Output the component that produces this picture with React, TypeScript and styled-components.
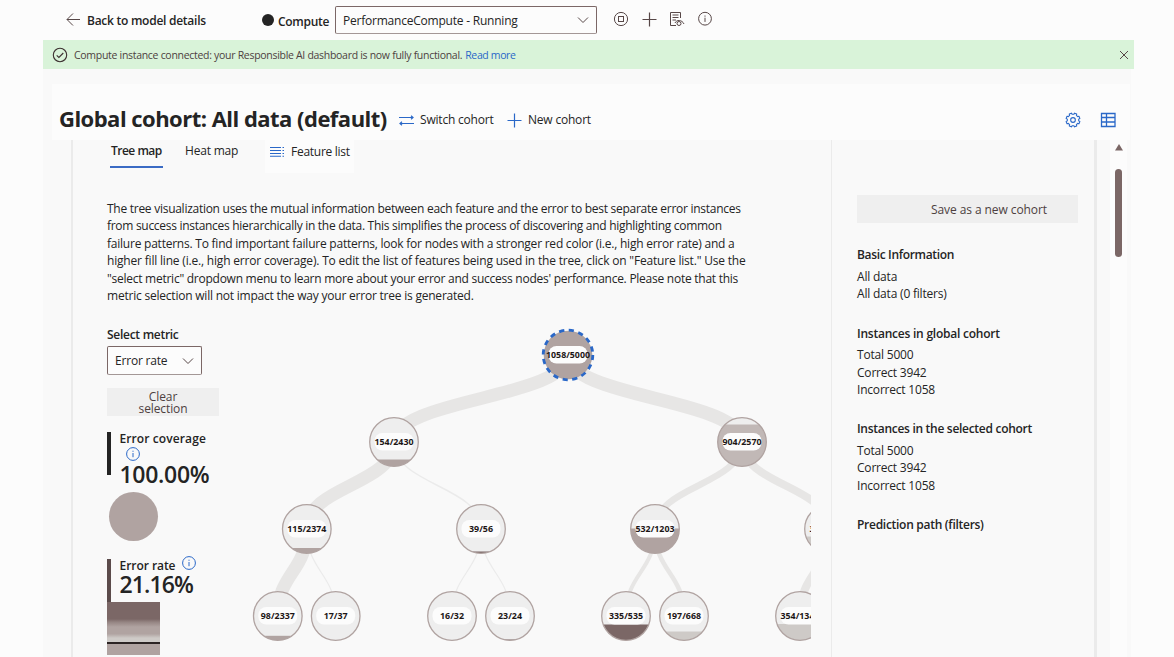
import React from "react";
import styled, { createGlobalStyle } from "styled-components";

const GlobalStyle = createGlobalStyle`
  * { box-sizing: border-box; }
  body {
    margin: 0;
    background: #fcfcfc;
    color: #242424;
    font-family: "Open Sans", "Noto Sans", sans-serif;
    font-size: 12px;
    overflow: hidden;
  }
`;

const Page = styled.div`
  width: 1174px;
  height: 657px;
  overflow: hidden;
  display: flex;
  flex-direction: column;
`;

const Label = styled.span<{ $size?: number; $weight?: number; $track?: number; $color?: string }>`
  font-size: ${(p) => p.$size ?? 12}px;
  font-weight: ${(p) => p.$weight ?? 400};
  letter-spacing: ${(p) => p.$track ?? -0.2}px;
  color: ${(p) => p.$color ?? "#242424"};
  line-height: 18px;
  white-space: nowrap;
`;

const TopBar = styled.header`
  height: 40px;
  flex: none;
  display: flex;
  padding-left: 66px;
`;

const BackLink = styled.div`
  display: flex;
  align-items: center;
  gap: 7px;
  height: 41px;
  width: 196px;
  & > svg { margin-bottom: 1px; }
`;

const ComputeLabel = styled.div`
  display: flex;
  align-items: center;
  gap: 4px;
  height: 43px;
  width: 73px;
`;

const StatusDot = styled.span`
  width: 12px;
  height: 12px;
  border-radius: 50%;
  background: #242424;
  margin-bottom: 3px;
`;

const Select = styled.div<{ $width: number; $height: number }>`
  width: ${(p) => p.$width}px;
  height: ${(p) => p.$height}px;
  flex: none;
  border: 1px solid #7b6766;
  border-bottom-color: #a39796;
  border-radius: 2px;
  background: #fcfcfc;
  display: flex;
  align-items: center;
  justify-content: space-between;
  padding: 0 7px;
`;

const ComputeSelect = styled(Select)`
  margin-top: 6px;
  & > span { margin-top: 2px; }
`;

const TopIcons = styled.div`
  display: flex;
  gap: 12px;
  margin: 11px 0 0 16px;
`;

const Banner = styled.div`
  flex: none;
  height: 29px;
  margin: 0 40px 0 43px;
  background: #d9f3d9;
  display: flex;
  align-items: center;
  padding: 0 5px 0 9px;
`;

const BannerText = styled.div`
  flex: 1;
  display: flex;
  gap: 3px;
  margin-left: 6px;
`;

const Workspace = styled.main`
  flex: 1;
  margin: 0 43px;
  background: #f9f9f9;
  padding: 15px 0 0 9px;
  display: flex;
  flex-direction: column;
`;

const CohortHeader = styled.div`
  flex: none;
  height: 56px;
  width: 1078px;
  background: #fcfcfc;
  display: flex;
  align-items: center;
  padding: 15px 14px 0 7px;
`;

const CohortTitle = styled.h1`
  margin: 0 0 3px;
  width: 340px;
  font-size: 22px;
  font-weight: 700;
  letter-spacing: -0.52px;
  line-height: 28px;
  white-space: nowrap;
`;

const HeaderAction = styled.div<{ $width: number }>`
  display: flex;
  align-items: center;
  gap: 6px;
  width: ${(p) => p.$width}px;
`;

const HeaderTools = styled.div`
  margin-left: auto;
  display: flex;
  gap: 19px;
`;

const Body = styled.div`
  flex: 1;
  display: flex;
  min-height: 0;
  padding-left: 19px;
`;

const Analysis = styled.section`
  width: 760px;
  border-left: 2px solid #ebebeb;
  padding-left: 34px;
  display: flex;
  flex-direction: column;
`;

const Tabs = styled.div`
  display: flex;
  height: 34px;
  padding-left: 3px;
`;

const Tab = styled.div<{ $active?: boolean }>`
  height: 28px;
  width: 53px;
  margin-right: 22px;
  padding: 2px 0 0 ${(p) => (p.$active ? 1 : 0)}px;
  border-bottom: 2px solid ${(p) => (p.$active ? "#3a6bc4" : "transparent")};
`;

const FeatureButton = styled.div`
  display: flex;
  align-items: center;
  gap: 7px;
  height: 33px;
  width: 89px;
  padding: 0 0 10px 5px;
  margin-left: 5px;
  background: #fcfcfc;
`;

const Description = styled.p`
  margin: 26px 0 0;
  line-height: 17.4px;
  display: flex;
  flex-direction: column;
`;

const DescriptionLine = styled.span<{ $track: number }>`
  letter-spacing: ${(p) => p.$track}px;
  white-space: nowrap;
`;

const Visual = styled.div`
  flex: 1;
  display: flex;
  min-height: 0;
`;

const Legend = styled.div`
  width: 138px;
  padding-top: 22px;
  display: flex;
  flex-direction: column;
`;

const MetricSelect = styled(Select)`
  margin-top: 2px;
`;

const ClearButton = styled.div`
  margin-top: 13px;
  width: 112px;
  height: 28px;
  flex: none;
  background: #efefef;
  display: flex;
  align-items: center;
  justify-content: center;
  text-align: center;
  line-height: 12px;
  letter-spacing: -0.1px;
  color: #4d3f3f;
  padding: 2px 26px 0;
`;

const Metric = styled.div<{ $top: number; $bar: string }>`
  margin-top: ${(p) => p.$top}px;
  height: 43px;
  flex: none;
  border-left: 4px solid ${(p) => p.$bar};
  padding-left: 8.5px;
  display: flex;
  flex-direction: column;
`;

const MetricHead = styled.div<{ $wrap?: boolean }>`
  display: flex;
  flex-wrap: ${(p) => (p.$wrap ? "wrap" : "nowrap")};
  align-content: flex-start;
  width: ${(p) => (p.$wrap ? 92 : 110)}px;
  gap: 0 7px;
  flex: none;
  height: ${(p) => (p.$wrap ? 31 : 14)}px;
  & > span { line-height: ${(p) => (p.$wrap ? 13 : 14)}px; }
  & > svg { flex: none; margin: ${(p) => (p.$wrap ? "2px 0 0 6px" : "-3px 0 0 0")}; }
`;

const MetricValue = styled.div<{ $track: number }>`
  font-size: 23px;
  font-weight: 600;
  letter-spacing: ${(p) => p.$track}px;
  line-height: 22px;
`;

const CoverageCircle = styled.div`
  width: 49px;
  height: 49px;
  flex: none;
  border-radius: 50%;
  background: #b0a3a1;
  margin: 17px 0 0 2px;
`;

const RateScale = styled.div`
  width: 53px;
  height: 53px;
  flex: none;
  background: linear-gradient(
    #7b6766 0 32%, #958583 38%, #b0a3a1 47% 60%, #cecac7 68% 76%,
    #2c2424 76% 79%, #b0a3a1 79%
  );
`;

const TreeArea = styled.svg`
  width: 566px;
  height: 337px;
  margin-top: 16px;
  overflow: hidden;
  flex: none;
`;

const Details = styled.aside`
  width: 266px;
  border-left: 1px solid #ebebeb;
  border-right: 3px solid #ebebeb;
  padding: 55px 16px 0 25px;
`;

const SaveButton = styled.div`
  height: 28px;
  width: 221px;
  background: #efefef;
  padding: 6px 0 0 74px;
`;

const InfoGroup = styled.div<{ $top: number }>`
  margin-top: ${(p) => p.$top}px;
  display: flex;
  flex-direction: column;
  & > :first-child { margin-bottom: 4px; }
  & > * { line-height: 17.5px; }
`;

const ScrollTrack = styled.div`
  margin-left: 13px;
  width: 17px;
  background: #fcfcfc;
  display: flex;
  flex-direction: column;
  align-items: center;
`;

const ScrollUp = styled.svg`
  width: 8px;
  height: 7px;
  margin-top: 4px;
`;

const ScrollThumb = styled.div`
  width: 7px;
  height: 88px;
  margin-top: 18px;
  border-radius: 4px;
  background: #7b6766;
`;

const BLUE = "#2a68c8";
const INK = "#574747";

const InfoIcon = () => (
  <svg width="14" height="14" viewBox="0 0 14 14" fill="none" stroke={BLUE}>
    <circle cx="7" cy="7" r="6.4" />
    <path d="M7 6v4.2M7 3.7v1.1" />
  </svg>
);

const Chevron = () => (
  <svg width="12" height="8" viewBox="0 0 12 8" fill="none" stroke={INK}>
    <path d="M1 1.5l5 5 5-5" />
  </svg>
);

const Plus = ({ color }: { color: string }) => (
  <svg width="16" height="16" viewBox="0 0 16 16" fill="none" stroke={color} strokeWidth="1.2">
    <path d="M8.5 1.5v14M1.5 8.5h14" />
  </svg>
);

const gearPath = (() => {
  const points: string[] = [];
  for (let i = 0; i < 8; i++) {
    [[-13, 6.6], [-9, 5.4], [9, 5.4], [13, 6.6]].forEach(([offset, r]) => {
      const a = ((i * 45 + offset) * Math.PI) / 180;
      points.push(`${(7.5 + r * Math.cos(a)).toFixed(2)} ${(7.5 + r * Math.sin(a)).toFixed(2)}`);
    });
  }
  return `M${points.join("L")}Z`;
})();

type TreeNode = {
  x: number;
  y: number;
  label: string;
  length: number;
  fill?: string;
  level?: number;
  selected?: boolean;
};

const nodes: TreeNode[] = [
  { x: 568, y: 355, label: "1058/5000", length: 44, fill: "#b0a3a1", level: 49, selected: true },
  { x: 394, y: 442, label: "154/2430", length: 39, fill: "#b0a3a1", level: 7 },
  { x: 742, y: 442, label: "904/2570", length: 39, fill: "#c1b8b6", level: 42 },
  { x: 306.8, y: 529, label: "115/2374", length: 39, fill: "#b0a3a1", level: 5.5 },
  { x: 481, y: 529, label: "39/56", length: 24, fill: "#7b6766", level: 2 },
  { x: 655, y: 529, label: "532/1203", length: 39, fill: "#b0a3a1", level: 25 },
  { x: 829, y: 529, label: "372/1367", length: 39, fill: "#cecac7", level: 17 },
  { x: 277.8, y: 616, label: "98/2337", length: 34, fill: "#b0a3a1", level: 4.7 },
  { x: 335.7, y: 616, label: "17/37", length: 24 },
  { x: 452, y: 616, label: "16/32", length: 24 },
  { x: 510, y: 616, label: "23/24", length: 24, fill: "#7b6766", level: 1 },
  { x: 626, y: 616, label: "335/535", length: 34, fill: "#7b6766", level: 16 },
  { x: 684, y: 616, label: "197/668", length: 34, fill: "#cecac7", level: 9 },
  { x: 800, y: 616, label: "354/1346", length: 39, fill: "#cecac7", level: 16.5 },
];

const links: [number, number, number][] = [
  [0, 1, 13], [0, 2, 13.5], [1, 3, 13], [1, 4, 1.4], [2, 5, 6.5], [2, 6, 8],
  [3, 7, 13], [3, 8, 1.2], [4, 9, 1.2], [4, 10, 1.2], [5, 11, 4], [5, 12, 4.5], [6, 13, 8],
];

const linkPath = (a: TreeNode, b: TreeNode) => {
  const mid = (a.y + b.y) / 2;
  return `M${a.x} ${a.y}C${a.x} ${mid} ${b.x} ${mid} ${b.x} ${b.y}`;
};

const Tree = () => (
  <TreeArea viewBox="245 320 566 337">
    <defs>
      <clipPath id="disc"><circle r="24.3" /></clipPath>
    </defs>
    {links.map(([from, to, width]) => (
      <path
        key={`${from}-${to}`}
        d={linkPath(nodes[from], nodes[to])}
        fill="none"
        stroke={width < 2 ? "#ebebeb" : "#e7e6e5"}
        strokeWidth={width}
      />
    ))}
    {nodes.map((n) => (
      <g key={n.label} transform={`translate(${n.x} ${n.y})`}>
        <circle r="24.3" fill="#eeeeee" />
        {n.fill && (
          <rect x="-25" y={24.5 - (n.level ?? 0)} width="50" height="50" fill={n.fill} clipPath="url(#disc)" />
        )}
        <circle
          r={n.selected ? 24.8 : 24.3}
          fill="none"
          stroke={n.selected ? BLUE : "#b0a3a1"}
          strokeWidth={n.selected ? 2.8 : 1.3}
          strokeDasharray={n.selected ? "5.2 4.54" : undefined}
        />
        <rect x="-19.5" y="-9" width="39" height="17.5" rx="8" fill="#fcfcfc" />
        <text
          x={-n.length / 2}
          y="2.7"
          textLength={n.length}
          lengthAdjust="spacingAndGlyphs"
          fontSize="9"
          fontWeight="700"
          fill="#1c1616"
        >
          {n.label}
        </text>
      </g>
    ))}
  </TreeArea>
);

const description: [string, number][] = [
  ["The tree visualization uses the mutual information between each feature and the error to best separate error instances", -0.268],
  ["from success instances hierarchically in the data. This simplifies the process of discovering and highlighting common", -0.293],
  ["failure patterns. To find important failure patterns, look for nodes with a stronger red color (i.e., high error rate) and a", -0.23],
  ['higher fill line (i.e., high error coverage). To edit the list of features being used in the tree, click on "Feature list." Use the', -0.19],
  ['"select metric" dropdown menu to learn more about your error and success nodes\' performance. Please note that this', -0.255],
  ["metric selection will not impact the way your error tree is generated.", -0.215],
];

const cohortCounts = ["Total 5000", "Correct 3942", "Incorrect 1058"];

const InfoBlock = ({ title, rows, top, track }: { title: string; rows: string[]; top: number; track?: number }) => (
  <InfoGroup $top={top}>
    <Label $weight={600} $track={track ?? -0.2}>{title}</Label>
    {rows.map((row) => <Label key={row}>{row}</Label>)}
  </InfoGroup>
);

export default function App() {
  return (
    <Page>
      <GlobalStyle />
      <TopBar>
        <BackLink>
          <svg width="14" height="14" viewBox="0 0 14 14" fill="none" stroke={INK}>
            <path d="M14 6.5H1M7 .5L1 6.5l6 6" />
          </svg>
          <Label $weight={600} $track={-0.26}>Back to model details</Label>
        </BackLink>
        <ComputeLabel>
          <StatusDot />
          <Label $weight={600} $track={-0.3}>Compute</Label>
        </ComputeLabel>
        <ComputeSelect $width={262} $height={28}>
          <Label $track={-0.22}>PerformanceCompute - Running</Label>
          <Chevron />
        </ComputeSelect>
        <TopIcons>
          <svg width="16" height="16" viewBox="0 0 16 16" fill="none" stroke={INK}>
            <circle cx="8" cy="8" r="6.6" />
            <rect x="5.5" y="5.5" width="5" height="5" />
          </svg>
          <Plus color={INK} />
          <svg width="16" height="16" viewBox="0 0 16 16" fill="none" stroke={INK}>
            <path d="M11.5 7V1.5h-10v13H7M3.5 4h6M3.5 6.5h6M3.5 9H7M6 12c1.5-3.5 7-3.5 9 1" />
            <circle cx="10" cy="12.5" r="2" />
          </svg>
          <svg width="16" height="16" viewBox="0 0 16 16" fill="none" stroke={INK}>
            <circle cx="8" cy="7.7" r="6.4" />
            <path d="M8 6.7v4.2M8 4.5v1.2" />
          </svg>
        </TopIcons>
      </TopBar>

      <Banner>
        <svg width="16" height="16" viewBox="0 0 16 16" fill="none" stroke="#3c3030" strokeWidth="1.1">
          <circle cx="8" cy="8" r="6.7" />
          <path d="M4.7 8.3l2.2 2.2L11.3 6" />
        </svg>
        <BannerText>
          <Label $size={10.5} $track={-0.295} $color="#4d3f3f">
            Compute instance connected: your Responsible AI dashboard is now fully functional.
          </Label>
          <Label $size={10.5} $track={-0.36} $color={BLUE}>Read more</Label>
        </BannerText>
        <svg width="10" height="10" viewBox="0 0 10 10" fill="none" stroke={INK}>
          <path d="M1 1l8 8M9 1L1 9" />
        </svg>
      </Banner>

      <Workspace>
        <CohortHeader>
          <CohortTitle>Global cohort: All data (default)</CohortTitle>
          <HeaderAction $width={107}>
            <svg width="15" height="14" viewBox="0 0 15 14" fill="none" stroke={BLUE} strokeWidth="1.2">
              <path d="M0 4.5h14M12 2.8l2 1.7-2 1.7M15 10.5H1M3 8.8l-2 1.7 2 1.7" />
            </svg>
            <Label>Switch cohort</Label>
          </HeaderAction>
          <HeaderAction $width={100}>
            <Plus color={BLUE} />
            <Label>New cohort</Label>
          </HeaderAction>
          <HeaderTools>
            <svg width="16" height="16" viewBox="0 0 15 15" fill="none" stroke={BLUE}>
              <path d={gearPath} strokeLinejoin="round" />
              <circle cx="7.5" cy="7.5" r="2.2" />
            </svg>
            <svg width="16" height="16" viewBox="0 0 16 16" fill="none" stroke={BLUE} strokeWidth="1.3">
              <path d="M1.5 1.5h13.5v13H1.5zM6.5 1.5v13M1.5 5.5H15M1.5 10H15" />
            </svg>
          </HeaderTools>
        </CohortHeader>

        <Body>
          <Analysis>
            <Tabs>
              <Tab $active><Label $weight={600} $track={-0.5}>Tree map</Label></Tab>
              <Tab><Label>Heat map</Label></Tab>
              <FeatureButton>
                <svg width="14" height="11" viewBox="0 0 14 11" fill="none" stroke={BLUE} strokeWidth="1.1">
                  <path d="M0 1.5h11M0 4.5h11M0 7.5h11M0 10.3h11" />
                  <path d="M12.5 1.5h1.5M12.5 4.5h1.5M12.5 7.5h1.5M12.5 10.3h1.5" />
                </svg>
                <Label $track={-0.27}>Feature list</Label>
              </FeatureButton>
            </Tabs>
            <Description>
              {description.map(([line, track]) => (
                <DescriptionLine key={line} $track={track}>{line}</DescriptionLine>
              ))}
            </Description>
            <Visual>
              <Legend>
                <Label $weight={600} $track={-0.28}>Select metric</Label>
                <MetricSelect $width={95} $height={29}>
                  <Label>Error rate</Label>
                  <Chevron />
                </MetricSelect>
                <ClearButton>Clear selection</ClearButton>
                <Metric $top={16} $bar="#242424">
                  <MetricHead $wrap>
                    <Label $weight={600} $track={0.1}>Error coverage</Label>
                    <InfoIcon />
                  </MetricHead>
                  <MetricValue $track={-0.3}>100.00%</MetricValue>
                </Metric>
                <CoverageCircle />
                <Metric $top={18} $bar="#5b4b4b">
                  <MetricHead>
                    <Label $weight={600} $track={-0.05}>Error rate</Label>
                    <InfoIcon />
                  </MetricHead>
                  <MetricValue $track={-0.9}>21.16%</MetricValue>
                </Metric>
                <RateScale />
              </Legend>
              <Tree />
            </Visual>
          </Analysis>

          <Details>
            <SaveButton><Label $color="#4d3f3f" $track={-0.08}>Save as a new cohort</Label></SaveButton>
            <InfoBlock title="Basic Information" rows={["All data", "All data (0 filters)"]} top={23} track={-0.34} />
            <InfoBlock title="Instances in global cohort" rows={cohortCounts} top={22} track={-0.23} />
            <InfoBlock title="Instances in the selected cohort" rows={cohortCounts} top={21.5} track={-0.29} />
            <InfoBlock title="Prediction path (filters)" rows={[]} top={21.5} track={-0.28} />
          </Details>

          <ScrollTrack>
            <ScrollUp viewBox="0 0 8 7">
              <path d="M4 0l4 6.5H0z" fill="#7b6766" />
            </ScrollUp>
            <ScrollThumb />
          </ScrollTrack>
        </Body>
      </Workspace>
    </Page>
  );
}
